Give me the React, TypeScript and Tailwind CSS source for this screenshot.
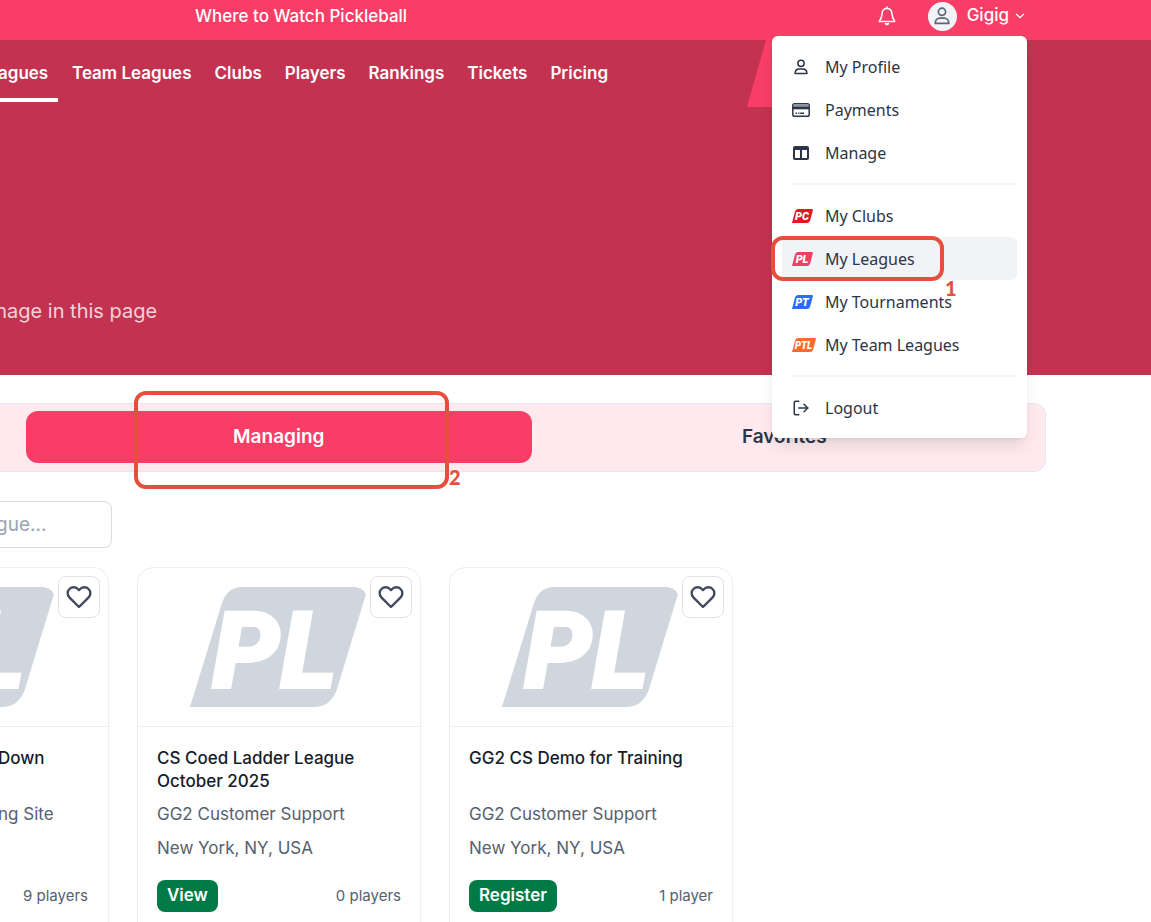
import type { ReactNode } from "react";
import { ChevronDown, LogOut } from "lucide-react";
import { FiHeart } from "react-icons/fi";
import { FaTableColumns } from "react-icons/fa6";

const navLinks = [
  "Team Leagues",
  "Clubs",
  "Players",
  "Rankings",
  "Tickets",
  "Pricing",
];

function UserIcon({ className }: { className?: string }) {
  return (
    <svg viewBox="0 0 16 18" fill="none" stroke="currentColor" className={className} aria-hidden="true">
      <circle cx="8" cy="4.8" r="3.6" strokeWidth="1.7" />
      <path
        strokeWidth="1.7"
        strokeLinejoin="round"
        d="M1.2 16.400C1.200 13.400 3.200 11.200 6 11.200H10C12.800 11.200 14.800 13.400 14.800 16.400Z"
      />
    </svg>
  );
}

function BellIcon() {
  return (
    <svg viewBox="0 0 18 20" fill="none" stroke="currentColor" className="h-5 w-[18px]" aria-hidden="true">
      <path
        strokeWidth="1.5"
        strokeLinejoin="round"
        d="M9 2.600C6 2.600 4.300 4.800 4.100 7.600C3.900 11 3.200 12.800 1.200 15.600H16.800C14.800 12.800 14.100 11 13.900 7.600C13.700 4.800 12 2.600 9 2.600Z"
      />
      <path strokeWidth="1.5" strokeLinecap="round" d="M9 1V2.500" />
      <path fill="currentColor" stroke="none" d="M6.500 17H11.500Q11 19.400 9 19.400T6.500 17Z" />
    </svg>
  );
}

function CardIcon() {
  return (
    <svg viewBox="0 0 18 14" className="h-3.5 w-[18px]" aria-hidden="true">
      <rect x="0.8" y="0.8" width="16.400" height="12.400" rx="1.800" fill="none" stroke="currentColor" strokeWidth="1.500" />
      <path fill="#8b93a1" d="M1.500 1.500H16.500V3.500H1.500Z" />
      <path fill="currentColor" d="M1 3.500H17V6.300H1Z" />
      <path fill="currentColor" d="M3.500 9.500H5V11H3.500ZM6.200 9.500H7.400V11H6.200ZM8.200 9.500H12V11H8.200Z" />
    </svg>
  );
}

function Badge({ label, color }: { label: string; color: string }) {
  const wide = label.length > 2;
  return (
    <svg
      viewBox={wide ? "0 0 24 14" : "0 0 21 14"}
      className={wide ? "h-3.5 w-6 shrink-0" : "h-3.5 w-[21px] shrink-0"}
      aria-hidden="true"
    >
      <path
        fill={color}
        d={
          wide
            ? "M0 14 3 2.5Q3.7 0 6 0H23Q24.2 0 23.8 1.5L21.3 11Q20.5 14 18 14Z"
            : "M0 14 3 2.5Q3.7 0 6 0H20Q21.2 0 20.8 1.5L18.3 11Q17.5 14 15 14Z"
        }
      />
      <text
        x={wide ? 11.5 : 10}
        y={wide ? 10.5 : 11}
        textAnchor="middle"
        fill="#fff"
        className={
          wide
            ? "font-['Roboto'] text-[10px] font-black italic"
            : "font-['Roboto'] text-[11px] font-black italic"
        }
      >
        {label}
      </text>
    </svg>
  );
}

function LeagueLogo() {
  return (
    <svg
      viewBox="0 0 176 120"
      className="h-[120px] w-44 shrink-0"
      role="img"
      aria-label="PL"
    >
      <path
        fill="#cfd6de"
        d="M0 120 32 16Q37 0 53 0H164Q172 0 176 7L147 102Q141 120 123 120Z"
      />
      <text
        x="22"
        y="101"
        fill="#fff"
        stroke="#fff"
        strokeWidth="2"
        className="font-['Roboto'] text-[108px] font-black italic"
      >
        PL
      </text>
    </svg>
  );
}

function MenuItem({
  icon,
  label,
  active = false,
  children,
}: {
  icon: ReactNode;
  label: string;
  active?: boolean;
  children?: ReactNode;
}) {
  return (
    <li className="relative">
      <a
        href="#"
        className={
          active
            ? "flex h-[43px] items-center gap-[9px] rounded-md bg-[#f2f3f7] pl-2.5"
            : "flex h-[43px] items-center gap-[9px] rounded-md pl-2.5"
        }
      >
        <span className="flex w-6 shrink-0 items-center">{icon}</span>
        {label}
      </a>
      {children}
    </li>
  );
}

function UserMenu() {
  return (
    <div className="absolute top-9 right-0 z-20 w-[255px] rounded-md bg-white px-2.5 py-[9px] font-['Noto_Sans',sans-serif] text-base font-normal text-[#2c3547] shadow-lg">
      <ul>
        <MenuItem icon={<UserIcon className="ml-0.5 h-4 w-3.5" />} label="My Profile" />
        <MenuItem icon={<CardIcon />} label="Payments" />
        <MenuItem icon={<FaTableColumns className="ml-px size-4" />} label="Manage" />
      </ul>
      <hr className="my-[9px] ml-2.5 border-t-2 border-[#f3f4f6]" />
      <ul>
        <MenuItem icon={<Badge label="PC" color="#dc1a22" />} label="My Clubs" />
        <MenuItem
          icon={<Badge label="PL" color="#f83e66" />}
          label="My Leagues"
          active
        >
          <span className="absolute -top-px -left-[11px] h-[45px] w-[173px] rounded-xl border-4 border-[#e5503c]" />
          <span className="absolute top-[35px] left-[163px] font-['Lato',sans-serif] text-xl leading-8 font-black text-[#e5503c]">
            1
          </span>
        </MenuItem>
        <MenuItem icon={<Badge label="PT" color="#2b6cf6" />} label="My Tournaments" />
        <MenuItem icon={<Badge label="PTL" color="#fd6a2b" />} label="My Team Leagues" />
      </ul>
      <hr className="my-[9px] ml-2.5 border-t-2 border-[#f3f4f6]" />
      <ul>
        <MenuItem icon={<LogOut className="size-[18px]" />} label="Logout" />
      </ul>
    </div>
  );
}

function Card({
  title,
  organizer,
  location,
  action,
  players,
  cut = false,
}: {
  title: string;
  organizer: string;
  location?: string;
  action?: string;
  players: string;
  cut?: boolean;
}) {
  return (
    <article
      className={
        cut
          ? "relative w-[109px] shrink-0 rounded-r-2xl border border-l-0 border-[#eceef2]"
          : "relative w-[284px] shrink-0 rounded-2xl border border-[#eceef2]"
      }
    >
      <div className="flex h-[159px] items-center justify-end overflow-hidden border-b border-[#eceef2] pr-[54px]">
        <LeagueLogo />
      </div>
      <button
        type="button"
        aria-label="Add to favorites"
        className="absolute top-2 right-2 flex size-[42px] items-center justify-center rounded-lg border border-[#dfe2ea] bg-white text-[#3f4a5c]"
      >
        <FiHeart className="size-[26px]" strokeWidth={2.2} />
      </button>
      <div className={cut ? "pt-5 pr-5 pb-8 -indent-0.5" : "px-[19px] pt-5 pb-8"}>
        <h3 className="h-[46px] text-[17px] leading-[23px] font-medium text-[#161c2b]">
          {title}
        </h3>
        <p className="mt-[9px] h-6 text-[17px] leading-6 text-[#56606f]">{organizer}</p>
        <p className="mt-2.5 h-6 text-[17px] leading-6 text-[#56606f]">{location}</p>
        <div className="mt-5 flex h-8 items-center justify-between">
          {action ? (
            <button
              type="button"
              className="h-8 rounded-lg bg-[#007a45] px-2.5 text-[17px] font-semibold text-white"
            >
              {action}
            </button>
          ) : (
            <span />
          )}
          <span className="ml-auto text-[15px] whitespace-nowrap text-[#56606f]">
            {players}
          </span>
        </div>
      </div>
    </article>
  );
}

export default function App() {
  return (
    <div className="h-screen overflow-hidden bg-white font-['Inter',sans-serif]">
      <header className="relative z-10 flex h-10 items-start justify-between bg-[#f83e66] pr-[124px] pl-[195px] text-[17px] font-medium text-white">
        <a href="#" className="leading-8">
          Where to Watch Pickleball
        </a>
        <div className="relative flex items-center">
          <button type="button" aria-label="Notifications" className="mr-8">
            <BellIcon />
          </button>
          <button type="button" className="flex h-8 items-center">
            <span className="mr-2.5 flex size-[29px] items-center justify-center rounded-full bg-[#f2f3f6] text-[#5b6576]">
              <UserIcon className="h-[18px] w-4" />
            </span>
            Gigig
            <ChevronDown className="ml-1 size-3.5" />
          </button>
          <UserMenu />
        </div>
      </header>

      <section className="relative h-[335px] bg-[#c43251] text-white">
        <svg
          viewBox="0 0 120 67"
          className="absolute top-0 right-[284px] h-[67px] w-[120px]"
          aria-hidden="true"
        >
          <path d="M19 0H120V67H0Z" fill="#f83e66" />
        </svg>
        <nav className="flex h-[62px] gap-[23px] text-[17px] leading-[66px] font-semibold">
          <a href="#" className="-mr-[9px] w-[58px] border-b-4 border-white -indent-0.5">
            agues
          </a>
          {navLinks.map((label) => (
            <a key={label} href="#">
              {label}
            </a>
          ))}
        </nav>
        <p className="-ml-4 pt-[195px] text-xl leading-7 text-[#f0d3da]">anage in this page</p>
      </section>

      <main>
        <div className="relative mt-7 mr-[105px] flex h-[69px] items-start rounded-r-xl border border-l-0 border-[#e4e6f7] bg-[#feeaee] pt-[7px] pr-2 pl-[26px] text-[19px] font-semibold">
          <button type="button" className="h-[52px] flex-1 rounded-xl bg-[#f83e66] text-white">
            Managing
          </button>
          <button type="button" className="h-[52px] flex-1 text-[#2c3547]">
            Favorites
          </button>
          <span className="absolute -top-[13px] left-[134px] h-[98px] w-[315px] rounded-xl border-4 border-[#e5503c]" />
          <span className="absolute top-[57px] left-[449px] font-['Lato',sans-serif] text-xl leading-8 font-black text-[#e5503c]">
            2
          </span>
        </div>

        <input
          type="search"
          aria-label="Search league"
          placeholder="gue..."
          className="mt-[29px] block h-[47px] w-28 rounded-r-lg border border-l-0 border-[#d8dce3] -indent-1 text-[19px] outline-none placeholder:text-[#9ba3b2]"
        />

        <div className="mt-[19px] flex gap-7">
          <Card title="Down" organizer="ng Site" players="9 players" cut />
          <Card
            title="CS Coed Ladder League October 2025"
            organizer="GG2 Customer Support"
            location="New York, NY, USA"
            action="View"
            players="0 players"
          />
          <Card
            title="GG2 CS Demo for Training"
            organizer="GG2 Customer Support"
            location="New York, NY, USA"
            action="Register"
            players="1 player"
          />
        </div>
      </main>
    </div>
  );
}
